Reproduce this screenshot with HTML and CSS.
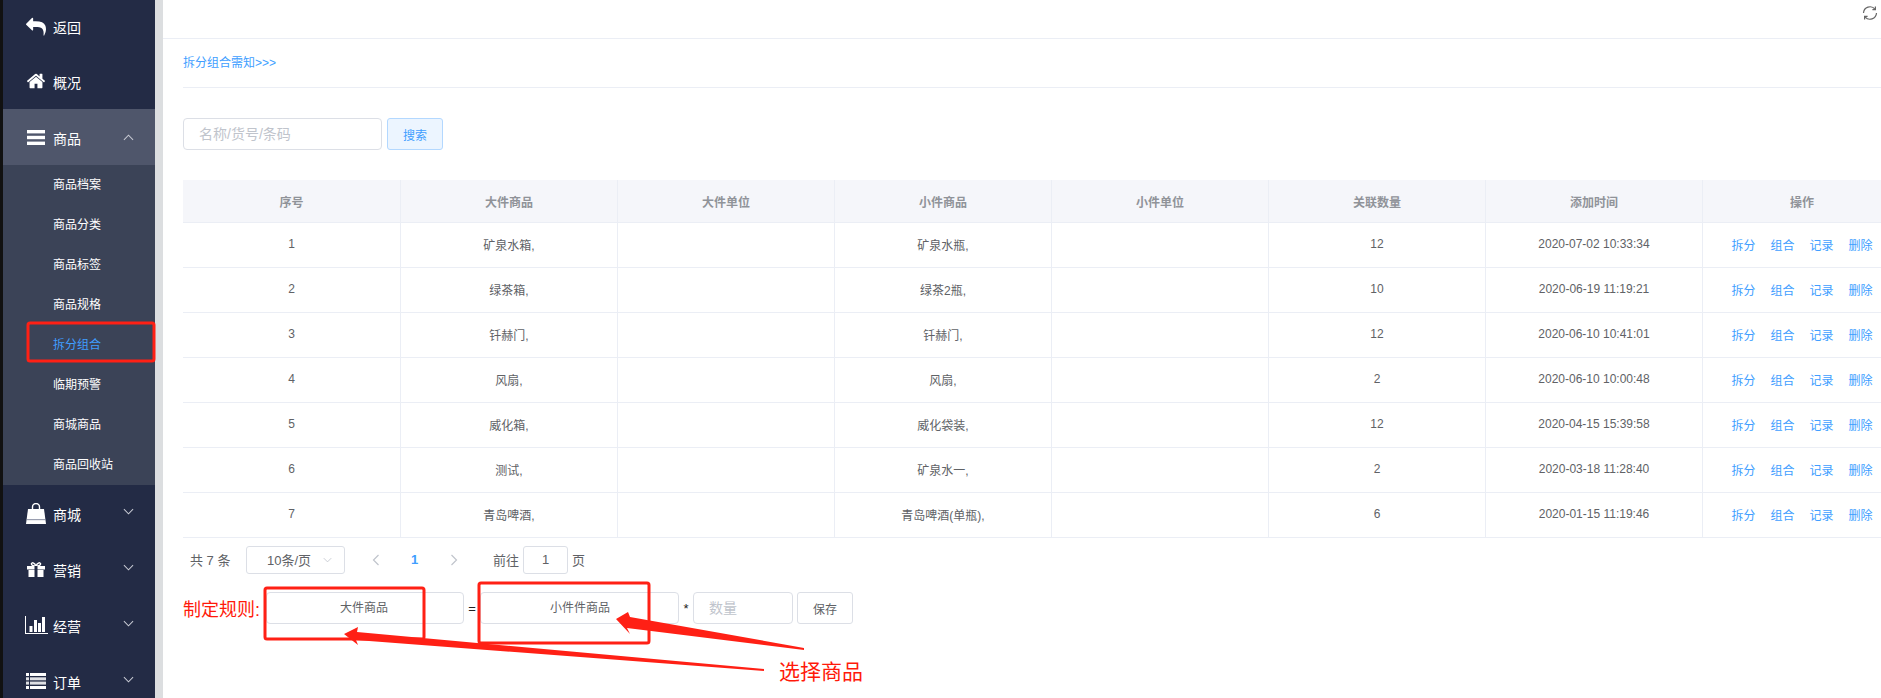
FILE: index.html
```html
<!DOCTYPE html>
<html lang="zh">
<head>
<meta charset="utf-8">
<title>拆分组合</title>
<link rel="stylesheet" href="styles.css">
</head>
<body>
<div class="app">
  <div class="strip"></div>
  <aside class="sidebar">
    <a class="nav-item"><span class="nav-icon"><svg class="ic-reply" viewBox="0 0 1792 1792"><path d="M1792 1120q0 166-127 451-3 7-10.5 24t-13.5 30-13 22q-12 17-28 17-15 0-23.5-10t-8.5-25q0-9 2.5-26.5t2.5-23.5q5-68 5-123 0-101-17.5-181t-48.5-138.5-80-101-105.5-69.5-133-42.5-154-21.5-175.5-6h-224v256q0 26-19 45t-45 19-45-19l-512-512q-19-19-19-45t19-45l512-512q19-19 45-19t45 19 19 45v256h224q713 0 875 403 53 134 53 333z"/></svg></span><span class="nav-text">返回</span></a>
    <a class="nav-item"><span class="nav-icon"><svg class="ic-home" viewBox="0 0 1792 1792"><path d="M1472 992v480q0 26-19 45t-45 19h-384v-384h-256v384h-384q-26 0-45-19t-19-45v-480q0-1 .5-3t.5-3l575-474 575 474q1 2 1 6zm223-69l-62 74q-8 9-21 11h-3q-13 0-21-7l-692-577-692 577q-12 8-24 7-13-2-21-11l-62-74q-8-10-7-23.5t11-21.5l719-599q32-26 76-26t76 26l244 204v-195q0-14 9-23t23-9h192q14 0 23 9t9 23v408l219 182q10 8 11 21.5t-7 23.5z"/></svg></span><span class="nav-text">概况</span></a>
    <a class="nav-item is-open"><span class="nav-icon"><svg class="ic-bars" viewBox="0 0 18 15"><rect y="0" width="18" height="3.4"/><rect y="5.8" width="18" height="3.4"/><rect y="11.6" width="18" height="3.4"/></svg></span><span class="nav-text">商品</span><svg class="chev" viewBox="0 0 12 7"><path d="M1 6l5-5 5 5"/></svg></a>
    <ul class="sub">
      <li>商品档案</li>
      <li>商品分类</li>
      <li>商品标签</li>
      <li>商品规格</li>
      <li class="active">拆分组合</li>
      <li>临期预警</li>
      <li>商城商品</li>
      <li>商品回收站</li>
    </ul>
    <a class="nav-item"><span class="nav-icon"><svg class="ic-bag" viewBox="0 0 20 21"><path class="ln" d="M6.5 8V4a3.5 3.5 0 0 1 7 0v4"/><path d="M2 6h16l2 15H0z"/><rect class="gr" x="1" y="16" width="18" height="1.2"/></svg></span><span class="nav-text">商城</span><svg class="chev" viewBox="0 0 12 7"><path d="M1 1l5 5 5-5"/></svg></a>
    <a class="nav-item"><span class="nav-icon"><svg class="ic-gift" viewBox="0 0 18 15"><path class="ln" d="M9 4C6 4 4 3 4.500 1.500S8 1 9 4c1-3 4-4 4.500-2.500S12 4 9 4z"/><rect y="4" width="18" height="3.500"/><rect x="1.500" y="8" width="15" height="7"/><rect class="dk" x="7.500" y="4" width="3" height="11"/></svg></span><span class="nav-text">营销</span><svg class="chev" viewBox="0 0 12 7"><path d="M1 1l5 5 5-5"/></svg></a>
    <a class="nav-item"><span class="nav-icon"><svg class="ic-chart" viewBox="0 0 23 18"><rect x="0" y="0" width="1" height="18"/><rect x="0" y="17" width="23" height="1"/><rect x="4.500" y="10" width="3" height="6"/><rect x="9" y="4" width="3" height="12"/><rect x="13" y="7" width="3" height="9"/><rect x="17" y="1" width="3" height="15"/></svg></span><span class="nav-text">经营</span><svg class="chev" viewBox="0 0 12 7"><path d="M1 1l5 5 5-5"/></svg></a>
    <a class="nav-item"><span class="nav-icon"><svg class="ic-list" viewBox="0 0 20 16"><rect y="0" width="20" height="3"/><rect y="4.300" width="20" height="3" opacity=".85"/><rect y="8.600" width="20" height="3" opacity=".85"/><rect y="13" width="20" height="3"/><rect class="dk" x="3" y="0" width="1" height="16"/></svg></span><span class="nav-text">订单</span><svg class="chev" viewBox="0 0 12 7"><path d="M1 1l5 5 5-5"/></svg></a>
  </aside>
  <div class="gutter"></div>
  <main class="main">
    <div class="toolbar">
      <svg class="refresh" viewBox="0 0 16 16"><path d="M1.500 8A6.500 6.500 0 0 1 13 4.200M14.500 8A6.500 6.500 0 0 1 3 11.800"/><path d="M13.400 1.600v3H10.400M2.600 14.400v-3h3"/></svg>
    </div>
    <div class="notice"><a>拆分组合需知&gt;&gt;&gt;</a></div>
    <div class="search">
      <div class="field search-input placeholder">名称/货号/条码</div>
      <button class="btn btn-plain">搜索</button>
    </div>
    <div class="table">
      <div class="row head">
        <div>序号</div><div>大件商品</div><div>大件单位</div><div>小件商品</div><div>小件单位</div><div>关联数量</div><div>添加时间</div><div>操作</div>
      </div>
      <div class="row">
        <div>1</div><div>矿泉水箱,</div><div></div><div>矿泉水瓶,</div><div></div><div>12</div><div>2020-07-02 10:33:34</div>
        <div class="ops"><a>拆分</a><a>组合</a><a>记录</a><a>删除</a></div>
      </div>
      <div class="row">
        <div>2</div><div>绿茶箱,</div><div></div><div>绿茶2瓶,</div><div></div><div>10</div><div>2020-06-19 11:19:21</div>
        <div class="ops"><a>拆分</a><a>组合</a><a>记录</a><a>删除</a></div>
      </div>
      <div class="row">
        <div>3</div><div>钎赫门,</div><div></div><div>钎赫门,</div><div></div><div>12</div><div>2020-06-10 10:41:01</div>
        <div class="ops"><a>拆分</a><a>组合</a><a>记录</a><a>删除</a></div>
      </div>
      <div class="row">
        <div>4</div><div>风扇,</div><div></div><div>风扇,</div><div></div><div>2</div><div>2020-06-10 10:00:48</div>
        <div class="ops"><a>拆分</a><a>组合</a><a>记录</a><a>删除</a></div>
      </div>
      <div class="row">
        <div>5</div><div>威化箱,</div><div></div><div>威化袋装,</div><div></div><div>12</div><div>2020-04-15 15:39:58</div>
        <div class="ops"><a>拆分</a><a>组合</a><a>记录</a><a>删除</a></div>
      </div>
      <div class="row">
        <div>6</div><div>测试,</div><div></div><div>矿泉水一,</div><div></div><div>2</div><div>2020-03-18 11:28:40</div>
        <div class="ops"><a>拆分</a><a>组合</a><a>记录</a><a>删除</a></div>
      </div>
      <div class="row">
        <div>7</div><div>青岛啤酒,</div><div></div><div>青岛啤酒(单瓶),</div><div></div><div>6</div><div>2020-01-15 11:19:46</div>
        <div class="ops"><a>拆分</a><a>组合</a><a>记录</a><a>删除</a></div>
      </div>
    </div>
    <div class="pager">
      <span class="total">共 7 条</span>
      <div class="select">10条/页<svg class="sel-chev" viewBox="0 0 12 7"><path d="M1 1l5 5 5-5"/></svg></div>
      <svg class="pg-arrow" viewBox="0 0 8 12"><path d="M6.500 1l-5 5 5 5"/></svg>
      <span class="pg-num">1</span>
      <svg class="pg-arrow pg-next" viewBox="0 0 8 12"><path d="M1.500 1l5 5-5 5"/></svg>
      <span class="goto">前往</span>
      <div class="goto-input">1</div>
      <span class="goto-unit">页</span>
    </div>
    <div class="rule">
      <span class="rule-label">制定规则:</span>
      <div class="field pick pick-a">大件商品</div>
      <span class="sym sym-eq">=</span>
      <div class="field pick pick-b">小件件商品</div>
      <span class="sym sym-star">*</span>
      <div class="field qty placeholder">数量</div>
      <button class="btn btn-save">保存</button>
    </div>
  </main>
</div>
<svg class="marks" viewBox="0 0 1881 698">
  <rect x="28" y="323" width="126" height="38" rx="2"/>
  <rect x="265" y="588" width="159" height="51" rx="2"/>
  <rect x="479" y="583" width="170" height="60" rx="2"/>
  <polygon class="fill" points="344,634 358,627 357,632 764,669 764,671 356,640 358,645"/>
  <polygon class="fill" points="616,619 628,612 630,617 804,648 804,650 627,628 630,634"/>
</svg>
<span class="callout">选择商品</span>
</body>
</html>
```
FILE: styles.css
```css
* { box-sizing: border-box; }
html, body { margin: 0; height: 100%; overflow: hidden; }
body {
  position: relative;
  font-family: "Liberation Sans", "Noto Sans CJK SC", sans-serif;
  font-size: 12px;
  color: #606266;
  background: #fff;
}
a { color: inherit; text-decoration: none; }
.app { display: flex; height: 698px; }
.strip { width: 3px; background: #111; flex: none; }
.sidebar { width: 152px; flex: none; background: #232b45; color: #fff; overflow: hidden; }
.gutter { width: 8px; flex: none; background: #dcdee0; }
.main { flex: 1; min-width: 0; overflow: hidden; }

.nav-item { display: flex; align-items: center; height: 56px; padding: 2px 0 0 20px; font-size: 14px; }
.nav-item:first-child { height: 53px; padding-top: 0; }
.is-open { background: #4f566b; }
.nav-icon { width: 26px; display: flex; justify-content: center; align-items: center; margin-right: 4px; margin-top: -2px; flex: none; }
.nav-item:first-child .nav-icon { margin-top: 0; }
.nav-icon svg { fill: #fff; display: block; }
.ln { fill: none; stroke: #fff; stroke-width: 1.4; }
.gr { fill: #9a9fb0; }
.dk { fill: #232b45; }
.ic-reply { width: 20px; height: 20px; }
.ic-home { width: 20px; height: 20px; }
.ic-bars { width: 18px; height: 15px; }
.ic-bag { width: 20px; height: 21px; }
.ic-gift { width: 18px; height: 15px; }
.ic-chart { width: 23px; height: 18px; }
.ic-list { width: 20px; height: 16px; }
.chev { width: 11px; height: 7px; margin-left: 42px; margin-top: -6px; fill: none; stroke: #c8cbd4; stroke-width: 1.1; }
.is-open .chev { margin-top: -2px; }
.sub { list-style: none; margin: 0; padding: 0; background: #3b4357; }
.sub li { height: 40px; line-height: 40px; padding-left: 50px; }
.sub .active { color: #409eff; }

.toolbar { height: 39px; border-bottom: 1px solid #ebeef5; display: flex; justify-content: flex-end; padding: 5px 3px 0 0; }
.refresh { width: 16px; height: 16px; fill: none; stroke: #666; stroke-width: 1.2; }
.notice { height: 49px; margin-left: 20px; border-bottom: 1px solid #ebeef5; line-height: 49px; color: #409eff; }
.search { display: flex; gap: 5px; margin: 30px 0 0 20px; height: 32px; }
.field { border: 1px solid #dcdfe6; border-radius: 4px; background: #fff; height: 32px; line-height: 30px; }
.placeholder { color: #c0c4cc; }
.search-input { width: 199px; padding-left: 15px; font-size: 14px; }
.btn { font: inherit; height: 32px; border-radius: 3px; padding: 0; }
.btn-plain { width: 56px; background: #ecf5ff; border: 1px solid #b3d8ff; color: #409eff; }

.table { margin: 30px 0 0 20px; width: 1720px; }
.row { display: grid; grid-template-columns: 218px repeat(6, 217px) 199px; height: 45px; border-bottom: 1px solid #ebeef5; }
.row > div { display: flex; align-items: center; justify-content: center; padding-bottom: 2px; border-right: 1px solid #ebeef5; }
.head { height: 43px; background: #f5f6fa; color: #909399; font-weight: 700; }
.head > div { padding-bottom: 0; }
.ops { gap: 15px; color: #409eff; }

.pager { display: flex; align-items: center; height: 29px; margin: 7px 0 0 27px; font-size: 13px; }
.total { width: 56px; }
.select { width: 99px; height: 28px; border: 1px solid #dcdfe6; border-radius: 3px; display: flex; align-items: center; padding-left: 20px; color: #606266; }
.sel-chev { width: 9px; height: 6px; margin-left: 12px; fill: none; stroke: #c0c4cc; stroke-width: 1.1; }
.pg-arrow { width: 8px; height: 12px; margin-left: 27px; fill: none; stroke: #c0c4cc; stroke-width: 1.2; }
.pg-num { margin-left: 31px; width: 8px; color: #409eff; font-weight: 700; }
.pg-next { margin-left: 31px; }
.goto { margin-left: 35px; }
.goto-input { width: 45px; height: 28px; margin-left: 4px; border: 1px solid #dcdfe6; border-radius: 3px; text-align: center; line-height: 26px; }
.goto-unit { margin-left: 4px; }

.rule { display: flex; align-items: center; height: 32px; margin: 18px 0 0 20px; }
.rule-label { width: 83px; font-size: 18px; color: #ff1a0a; flex: none; }
.pick { flex: none; }
.pick-a { width: 198px; padding-left: 73px; }
.pick-b { width: 199px; padding-left: 69px; }
.sym { width: 16px; text-align: center; color: #222; font-size: 13px; flex: none; }
.sym-star { width: 14px; }
.qty { width: 100px; padding-left: 15px; font-size: 14px; flex: none; }
.btn-save { width: 56px; margin-left: 4px; background: #fff; border: 1px solid #dcdfe6; color: #606266; flex: none; }

.marks { position: absolute; left: 0; top: 0; width: 1881px; height: 698px; pointer-events: none; fill: none; stroke: #ff2015; stroke-width: 3; }
.marks .fill { fill: #ff2015; stroke: none; }
.callout { position: absolute; left: 779px; top: 659px; font-size: 21px; line-height: 26px; color: #ff1a0a; }
```
